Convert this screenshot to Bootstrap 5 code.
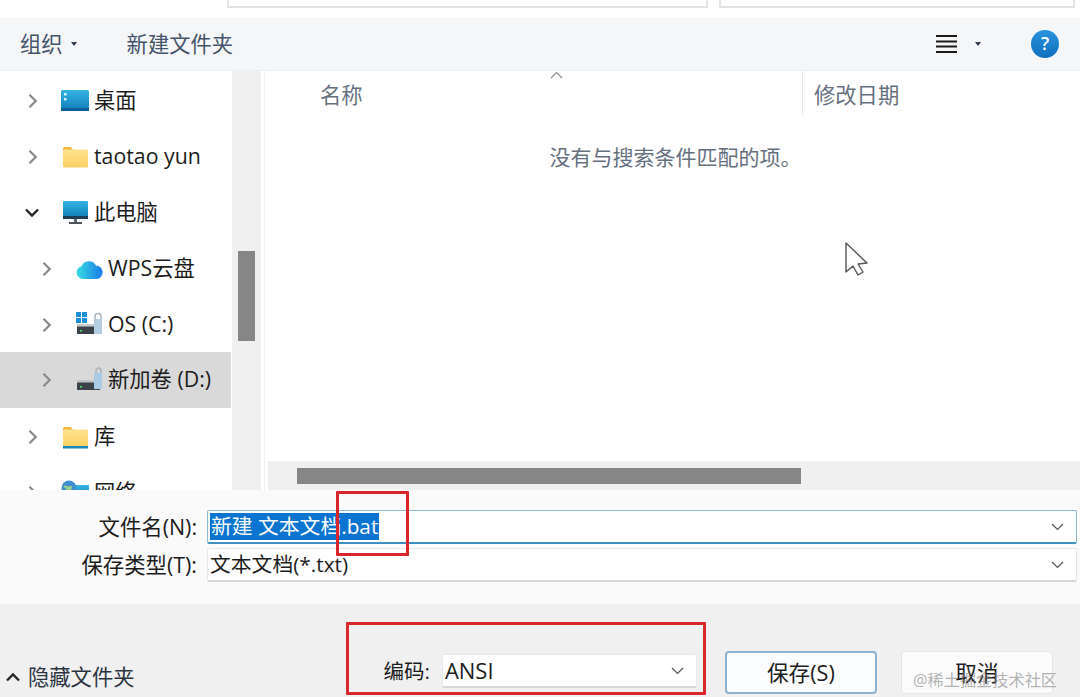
<!DOCTYPE html>
<html lang="zh-CN">
<head>
  <meta charset="UTF-8">
  <meta name="viewport" content="width=device-width, initial-scale=1">
  <title>另存为</title>
  <link href="https://cdn.jsdelivr.net/npm/bootstrap@5.3.3/dist/css/bootstrap.min.css" rel="stylesheet">
  <style>
    html, body { height: 697px; overflow: hidden; }
    body {
      position: relative;
      width: 1080px;
      background: #fff;
      font-family: "Open Sans", "Noto Sans CJK SC", sans-serif;
      font-size: 21.3px;
      line-height: 1.2;
      color: #1c1c1c;
    }
    .top-strip { height: 18px; padding-left: 227px; gap: 11px; }
    .top-box { height: 8px; border: 2px solid #e2e4e6; border-top: 0; }
    .top-box.one { width: 481px; }
    .top-box.two { width: 356px; }
    .tool-bar { height: 53px; background: #f4f6f8; border-bottom: 1px solid #eceef0; color: #44546a; padding-left: 20px; }
    .caret-down { width: 0; height: 0; border: 3.5px solid transparent; border-top: 4px solid #33404f; border-bottom: 0; }
    .tool-new { margin-left: 50px; }
    .view-lines { margin-left: auto; width: 21px; }
    .view-caret { margin-left: 18px; }
    .help-dot { width: 28px; height: 28px; border-radius: 50%; margin: 0 21px 0 50px; background: linear-gradient(#2a93dd, #0f6fbd); color: #fff; font-size: 18px; font-weight: 600; }
    .mid-area { height: 419px; }
    .side-tree { width: 232px; padding-top: 2px; overflow: hidden; }
    .tree-row { height: 56px; flex-shrink: 0; padding-left: 28px; }
    .tree-row.sub { padding-left: 42px; }
    .tree-row.picked { background: #d9d9d9; width: 231px; margin-top: -1px; margin-bottom: 1px; }
    .tree-row span { margin-bottom: 2px; }
    .tree-row svg.arrow { width: 10px; height: 14px; margin-right: 22px; flex-shrink: 0; }
    .tree-row svg.arrow.open { width: 14px; margin-left: -3px; margin-right: 21px; }
    .tree-row svg.pic { width: 30px; height: 26px; margin-right: 4px; flex-shrink: 0; }
    .side-bar { width: 29px; background: #f0f0f0; padding: 180px 6px 0 6px; }
    .side-thumb { height: 90px; background: #868686; }
    .file-pane { flex: 1; margin-left: 3px; border-left: 1px solid #f0f0f0; }
    .pane-head { height: 44px; color: #66717f; }
    .head-name { width: 537px; padding: 11px 0 0 55px; }
    .head-date { flex: 1; padding: 11px 0 0 11px; border-left: 1px solid #e8e8e8; }
    .sort-mark { position: absolute; left: 550px; top: 71px; width: 13px; height: 8px; }
    .no-result { margin-top: 30px; padding-left: 6px; color: #66717f; font-size: 21px; }
    .h-track { height: 29px; margin-left: 3px; margin-top: auto; background: #f0f0f0; padding: 7px 0 0 29px; }
    .h-thumb { width: 504px; height: 16px; background: #868686; }
    .name-area { height: 114px; background: #fafafa; padding: 20px 3px 0 0; }
    .form-line { height: 34px; margin-bottom: 4px; }
    .form-line label { width: 197px; text-align: right; margin: 0 10px 0 0; font-size: 21.4px; }
    .win-field {
      flex: 1; height: 34px; padding: 0 12px 0 2px;
      border: 1px solid #e8e8e8; border-bottom: 2px solid #d8d8d8; border-radius: 2px;
      background: #fff; color: #1c1c1c; font-size: 20.8px;
    }
    .win-field.active { border-color: #8fb8d6; border-bottom-color: #3f8fc0; }
    .win-field.enc { flex: none; width: 255px; padding-left: 2px; }
    .enc-value { font-size: 22px; }
    .sel-text { background: #0a74d0; color: #fff; height: 27px; line-height: 27px; padding: 0 1px; }
    .field-arrow { margin-left: auto; width: 13px; height: 8px; }
    .foot-area { height: 93px; background: #f0f0f0; padding: 0 27px 3px 5px; }
    .hide-link { margin-bottom: 4px; color: #2b3440; }
    .hide-link svg { width: 16px; height: 10px; margin-right: 7px; }
    .enc-label { margin-left: 249px; margin-right: 11px; margin-bottom: 10px; font-size: 20.5px; }
    .enc-box { margin-bottom: 6px; margin-left: 1px; }
    .win-btn {
      width: 152px; height: 43px; padding: 0; font-size: 21.6px; line-height: 1.2; color: #1c1c1c;
      background: #fcfdfe; border: 2px solid #8cb3d2; border-radius: 4px;
    }
    .win-btn.save { margin-left: 28px; }
    .win-btn.cancel { margin-left: 24px; background: #fbfbfb; border: 1px solid #e6e6e6; }
    .red-note { position: absolute; border: 3px solid #d8262c; border-radius: 1px; pointer-events: none; }
    .red-note.one { left: 336px; top: 491px; width: 73px; height: 65px; }
    .red-note.two { left: 346px; top: 622px; width: 360px; height: 73px; }
    .mouse-mark { position: absolute; left: 844px; top: 240px; width: 25px; height: 36px; }
    .water-mark { position: absolute; left: 913px; top: 671px; font-size: 16.2px; color: rgba(130, 130, 130, .62); white-space: nowrap; }
  </style>
</head>
<body>

<svg width="0" height="0" class="position-absolute">
  <defs>
    <linearGradient id="blueFill" x1="0" y1="0" x2="0" y2="1"><stop offset="0" stop-color="#35b4e4"/><stop offset="1" stop-color="#0f7cb8"/></linearGradient>
    <linearGradient id="yellowFill" x1="0" y1="0" x2="0" y2="1"><stop offset="0" stop-color="#ffe38f"/><stop offset="1" stop-color="#fbd063"/></linearGradient>
    <linearGradient id="cloudFill" x1="0" y1="0" x2="1" y2="0"><stop offset="0" stop-color="#35dce0"/><stop offset="1" stop-color="#1c7bea"/></linearGradient>
    <symbol id="arrowRight" viewBox="0 0 10 14"><path d="M1.500 .8 7.700 7 1.500 13.200" fill="none" stroke="#8a8a8a" stroke-width="2.200"/></symbol>
    <symbol id="arrowDown" viewBox="0 0 14 14"><path d="M1 3.500l6 6 6-6" fill="none" stroke="#262626" stroke-width="2.400"/></symbol>
    <symbol id="folderPic" viewBox="0 0 30 26">
      <path d="M3 4.500a1.500 1.500 0 0 1 1.500-1.500h6l3 3h-10.500z" fill="#f4b63c"/>
      <rect x="3" y="5.500" width="25" height="18" rx="1.500" fill="url(#yellowFill)"/>
    </symbol>
  </defs>
</svg>

<div class="top-strip d-flex">
  <div class="top-box one"></div>
  <div class="top-box two"></div>
</div>

<div class="tool-bar d-flex align-items-center">
  <span>组织</span>
  <span class="caret-down ms-2"></span>
  <span class="tool-new">新建文件夹</span>
  <svg class="view-lines" height="18" viewBox="0 0 21 18"><path d="M0 1h21M0 6.500h21M0 11.500h21M0 17h21" stroke="#1a1a1a" stroke-width="1.800"/></svg>
  <span class="caret-down view-caret"></span>
  <span class="help-dot d-flex align-items-center justify-content-center">?</span>
</div>

<div class="mid-area d-flex">
  <div class="side-tree d-flex flex-column">
    <div class="tree-row d-flex align-items-center">
      <svg class="arrow"><use href="#arrowRight"/></svg>
      <svg class="pic" viewBox="0 0 30 26"><rect x="1" y="2" width="28" height="21" rx="1.500" fill="url(#blueFill)"/><rect x="1" y="20" width="28" height="3" fill="#0c5f96"/><rect x="4" y="5" width="2.500" height="2.500" fill="#d8f2fb"/><rect x="4" y="10" width="2.500" height="2.500" fill="#d8f2fb"/></svg>
      <span>桌面</span>
    </div>
    <div class="tree-row d-flex align-items-center">
      <svg class="arrow"><use href="#arrowRight"/></svg>
      <svg class="pic"><use href="#folderPic"/></svg>
      <span>taotao yun</span>
    </div>
    <div class="tree-row d-flex align-items-center">
      <svg class="arrow open"><use href="#arrowDown"/></svg>
      <svg class="pic" viewBox="0 0 30 26"><rect x="3" y="1" width="25" height="17" rx="1" fill="url(#blueFill)"/><rect x="3" y="16" width="25" height="3" fill="#1d3f55"/><rect x="14" y="19" width="3" height="3" fill="#5f6b73"/><rect x="9" y="22" width="13" height="2" fill="#4a555c"/></svg>
      <span>此电脑</span>
    </div>
    <div class="tree-row sub d-flex align-items-center">
      <svg class="arrow"><use href="#arrowRight"/></svg>
      <svg class="pic" viewBox="0 0 30 26"><path d="M9 23a6.500 6.500 0 0 1-1.500-12.800A8 8 0 0 1 22 9.500a6.800 6.800 0 0 1 1 13.500z" fill="url(#cloudFill)"/></svg>
      <span>WPS云盘</span>
    </div>
    <div class="tree-row sub d-flex align-items-center">
      <svg class="arrow"><use href="#arrowRight"/></svg>
      <svg class="pic" viewBox="0 0 30 26"><path d="M2 0h5v5H2zM8 0h5v5H8zM2 6h5v5H2zM8 6h5v5H8z" fill="#1b8ed6"/><rect x="3" y="14" width="23" height="8" fill="#3c4348"/><rect x="3" y="12" width="23" height="2.500" fill="#c9ced2"/><rect x="6" y="18" width="2" height="1.500" fill="#54e06c"/><path d="M21 7V4.500a3 3 0 0 1 6 0V7" fill="none" stroke="#a9b4bd" stroke-width="1.500"/><rect x="20" y="7" width="8" height="15" fill="#b5cfe2"/></svg>
      <span>OS (C:)</span>
    </div>
    <div class="tree-row sub picked d-flex align-items-center">
      <svg class="arrow"><use href="#arrowRight"/></svg>
      <svg class="pic" viewBox="0 0 30 26"><rect x="3" y="15" width="23" height="8" fill="#3c4348"/><rect x="3" y="13" width="23" height="2.500" fill="#bfc4c8"/><rect x="6" y="19" width="2" height="1.500" fill="#54e06c"/><path d="M22 6V3.500a2.500 2.500 0 0 1 5 0V6" fill="none" stroke="#a9b4bd" stroke-width="1.500"/><rect x="20" y="6" width="8" height="16" fill="#a9cbe6"/></svg>
      <span>新加卷 (D:)</span>
    </div>
    <div class="tree-row d-flex align-items-center">
      <svg class="arrow"><use href="#arrowRight"/></svg>
      <svg class="pic" viewBox="0 0 30 26"><use href="#folderPic"/><rect x="3" y="22" width="25" height="2.500" fill="#1e88b8"/></svg>
      <span>库</span>
    </div>
    <div class="tree-row d-flex align-items-center">
      <svg class="arrow"><use href="#arrowRight"/></svg>
      <svg class="pic" viewBox="0 0 30 26"><rect x="9" y="5" width="20" height="15" fill="url(#blueFill)"/><circle cx="9" cy="8" r="7.500" fill="#3f8fd0"/><path d="M3 6c3-2 4 2 7 0s2 5-1 6" fill="#9ad08a"/></svg>
      <span>网络</span>
    </div>
  </div>
  <div class="side-bar"><div class="side-thumb"></div></div>
  <div class="file-pane d-flex flex-column">
    <div class="pane-head d-flex">
      <div class="head-name">名称</div>
      <div class="head-date">修改日期</div>
    </div>
    <div class="no-result text-center">没有与搜索条件匹配的项。</div>
    <div class="h-track"><div class="h-thumb"></div></div>
  </div>
</div>

<svg class="sort-mark" viewBox="0 0 13 8"><path d="M1 7 6.500 1.500 12 7" fill="none" stroke="#8c8c8c" stroke-width="1.200"/></svg>

<div class="name-area">
  <div class="form-line d-flex align-items-center">
    <label>文件名(N):</label>
    <div class="win-field active d-flex align-items-center">
      <span class="sel-text">新建 文本文档.bat</span>
      <svg class="field-arrow" viewBox="0 0 13 8"><path d="M1 1l5.500 5.500L12 1" fill="none" stroke="#555" stroke-width="1.200"/></svg>
    </div>
  </div>
  <div class="form-line d-flex align-items-center">
    <label>保存类型(T):</label>
    <div class="win-field d-flex align-items-center">
      <span>文本文档(*.txt)</span>
      <svg class="field-arrow" viewBox="0 0 13 8"><path d="M1 1l5.500 5.500L12 1" fill="none" stroke="#555" stroke-width="1.200"/></svg>
    </div>
  </div>
</div>

<div class="foot-area d-flex align-items-end">
  <div class="hide-link d-flex align-items-center">
    <svg viewBox="0 0 16 10"><path d="M2 8.500 8 2.500l6 6" fill="none" stroke="#262626" stroke-width="2.400"/></svg>
    <span>隐藏文件夹</span>
  </div>
  <span class="enc-label">编码:</span>
  <div class="win-field enc enc-box d-flex align-items-center">
    <span class="enc-value">ANSI</span>
    <svg class="field-arrow" viewBox="0 0 13 8"><path d="M1 1l5.500 5.500L12 1" fill="none" stroke="#555" stroke-width="1.200"/></svg>
  </div>
  <button type="button" class="btn win-btn save">保存(S)</button>
  <button type="button" class="btn win-btn cancel">取消</button>
</div>

<div class="red-note one"></div>
<div class="red-note two"></div>

<svg class="mouse-mark" viewBox="0 0 25 36"><path d="M2 3v29l7-6 5 9 5-3-5-8 9-1z" fill="#fff" stroke="#555" stroke-width="1.400" stroke-linejoin="round"/></svg>

<div class="water-mark">@稀土掘金技术社区</div>

<script src="https://cdn.jsdelivr.net/npm/bootstrap@5.3.3/dist/js/bootstrap.bundle.min.js"></script>
</body>
</html>
